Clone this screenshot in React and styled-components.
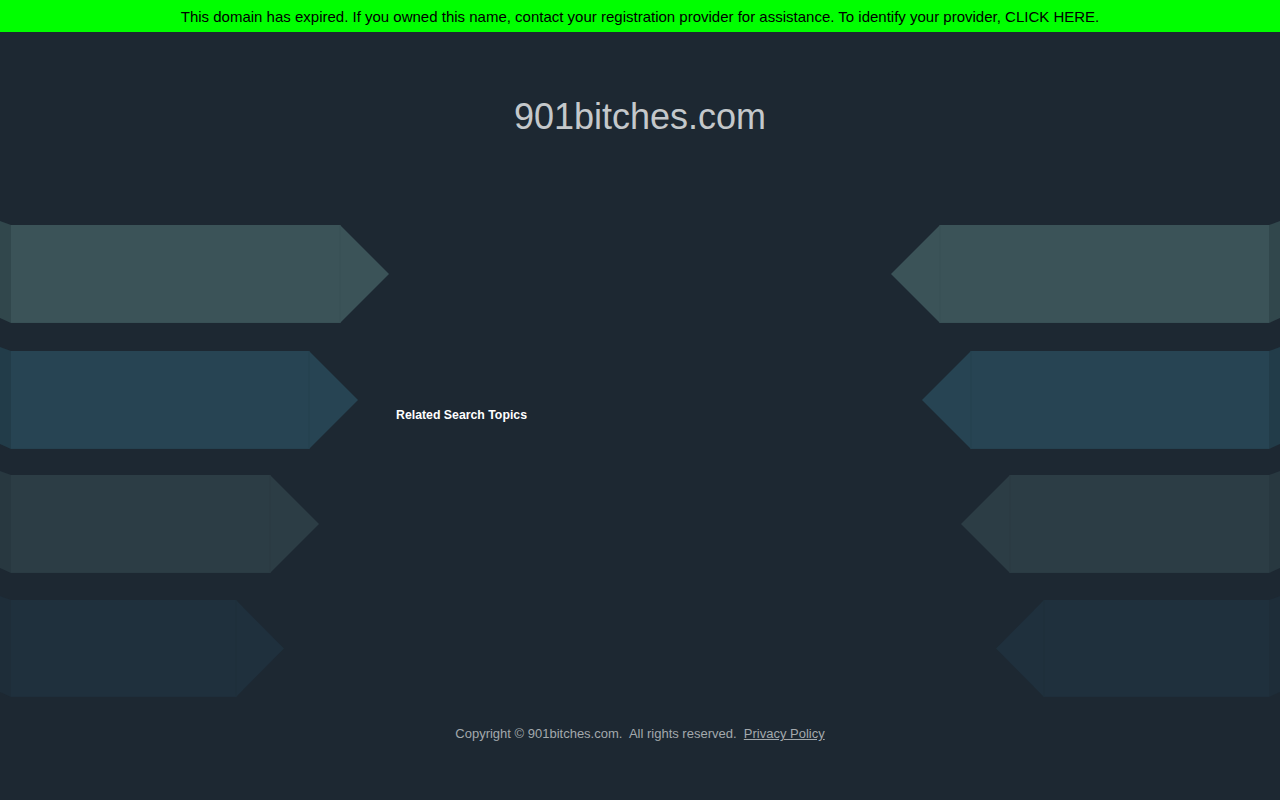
import React from "react";
import styled, { createGlobalStyle } from "styled-components";

const GlobalStyle = createGlobalStyle`
  html, body {
    margin: 0;
    padding: 0;
    background-color: #1d2832;
    font-family: "Liberation Sans", Arial, sans-serif;
  }
`;

const Page = styled.div`
  width: 1280px;
  height: 800px;
  overflow: hidden;
  background-color: #1d2832;
`;

const Banner = styled.div`
  height: 32px;
  display: flex;
  align-items: center;
  justify-content: center;
  background-color: #00ff00;
  color: #000;
  font-size: 15px;
`;

const BannerLink = styled.a`
  color: #000;
  text-decoration: none;
  cursor: pointer;
`;

const Header = styled.header`
  padding-top: 64px;
  text-align: center;
`;

const Title = styled.h1`
  margin: 0;
  font-size: 36px;
  line-height: 41px;
  font-weight: normal;
  color: #c4c8cb;
`;

const Main = styled.main`
  margin-top: 81px;
  height: 482px;
  display: grid;
  grid-template-columns: 390px 1fr 390px;
`;

const Center = styled.div`
  padding: 189px 0 0 6px;
`;

const TopicsHeading = styled.h2`
  margin: 0;
  font-size: 12.3px;
  line-height: 16px;
  font-weight: bold;
  color: #ffffff;
`;

const ArrowSvg = styled.svg`
  display: block;
  transform: ${(props) => (props.$mirror ? "scaleX(-1)" : "none")};
`;

const Footer = styled.footer`
  margin-top: 26px;
  text-align: center;
  font-size: 13px;
  line-height: 15px;
  color: #a3a9ad;
`;

const FooterLink = styled.a`
  color: #a3a9ad;
  text-decoration: underline;
  cursor: pointer;
`;

const rows = [
  { top: 7, bottom: 105, body: 340, tip: 389, fill: "#3b5358", tab: "#31474c", edge: "#385055" },
  { top: 133, bottom: 231, body: 309, tip: 358, fill: "#274453", tab: "#223c49", edge: "#25414f" },
  { top: 257, bottom: 355, body: 270, tip: 319, fill: "#2c3d45", tab: "#283840", edge: "#2a3b43" },
  { top: 382, bottom: 479, body: 236, tip: 284, fill: "#1f303d", tab: "#1e2d39", edge: "#1e2e3b" },
];

const Arrows = ({ mirror }) => (
  <ArrowSvg $mirror={mirror} width="390" height="482" viewBox="0 0 390 482">
    {rows.map((r, i) => {
      const mid = (r.top + r.bottom) / 2;
      return (
        <g key={i}>
          <polygon points={`0,${r.top - 4} 11,${r.top} 11,${r.bottom} 0,${r.bottom - 5}`} fill={r.tab} />
          <polygon
            points={`11,${r.top} ${r.body},${r.top} ${r.tip},${mid} ${r.body},${r.bottom} 11,${r.bottom}`}
            fill={r.fill}
          />
          <line x1={r.body} y1={r.top} x2={r.body} y2={r.bottom} stroke={r.edge} strokeWidth="1" />
          <line x1="11" y1={r.bottom - 0.5} x2={r.body} y2={r.bottom - 0.5} stroke={r.edge} strokeWidth="1" />
        </g>
      );
    })}
  </ArrowSvg>
);

const App = () => {
  return (
    <Page>
      <GlobalStyle />
      <Banner>
        <span>
          This domain has expired. If you owned this name, contact your registration provider for
          assistance. To identify your provider, <BannerLink>CLICK HERE.</BannerLink>
        </span>
      </Banner>
      <Header>
        <Title>901bitches.com</Title>
      </Header>
      <Main>
        <Arrows />
        <Center>
          <TopicsHeading>Related Search Topics</TopicsHeading>
        </Center>
        <Arrows mirror />
      </Main>
      <Footer>
        Copyright © 901bitches.com.&nbsp; All rights reserved.&nbsp;&nbsp;
        <FooterLink>Privacy Policy</FooterLink>
      </Footer>
    </Page>
  );
};

export default App;
